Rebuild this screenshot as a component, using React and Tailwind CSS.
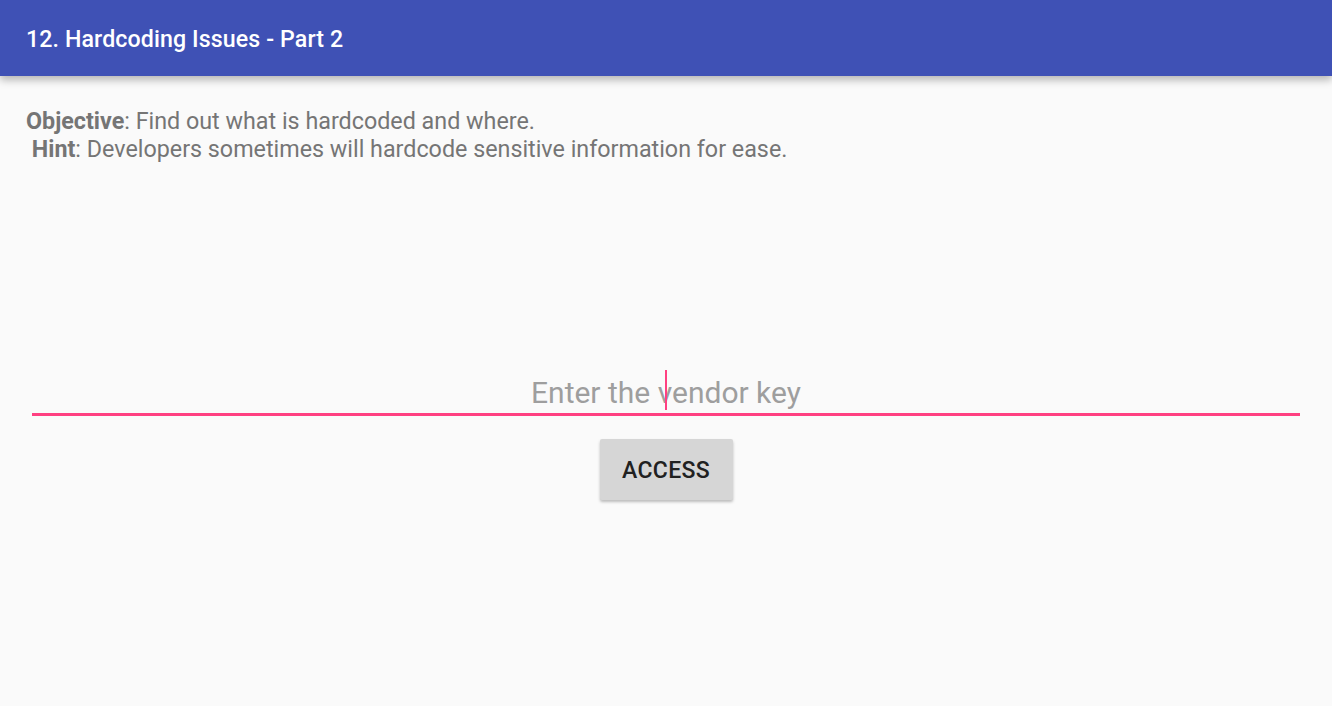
export default function App() {
  return (
    <div className="w-[1332px] h-[706px] bg-[#fafafa] overflow-hidden flex flex-col" style={{ fontFamily: 'Roboto, "Noto Sans", sans-serif' }}>
      {/* Toolbar */}
      <div className="h-[76px] shrink-0 bg-[#3f51b5] flex items-center pl-[26px] pt-[3px] shadow-[0_4px_8px_rgba(0,0,0,0.28)] relative z-10">
        <h1 className="text-white text-[23.2px] font-medium tracking-[0.1px]">12. Hardcoding Issues - Part 2</h1>
      </div>

      {/* Content */}
      <div className="flex flex-col px-[26px] pt-[31px]">
        <p className="text-[#757575] text-[23.3px] leading-[28px]">
          <span className="font-bold">Objective</span>: Find out what is hardcoded and where.
          <br />
          &nbsp;<span className="font-bold">Hint</span>: Developers sometimes will hardcode sensitive information for ease.
        </p>

        <div className="mt-[205px] mx-[6px] flex flex-col items-center">
          <div className="relative w-full h-[48px] border-b-[3px] border-[#ff4081] flex items-center justify-center">
            <span className="text-[30px] text-[#9e9e9e] leading-none pt-[4px]">Enter the vendor key</span>
            <span className="absolute left-[633px] top-[2px] w-[2px] h-[40px] bg-[#ff4081]" />
          </div>
          <button className="mt-[23px] w-[133px] h-[61px] pt-[4px] bg-[#d6d6d6] rounded-[2px] shadow-[0_2px_3px_rgba(0,0,0,0.25)] text-[#212121] text-[23px] font-medium tracking-[0.3px]">
            ACCESS
          </button>
        </div>
      </div>
    </div>
  );
}
